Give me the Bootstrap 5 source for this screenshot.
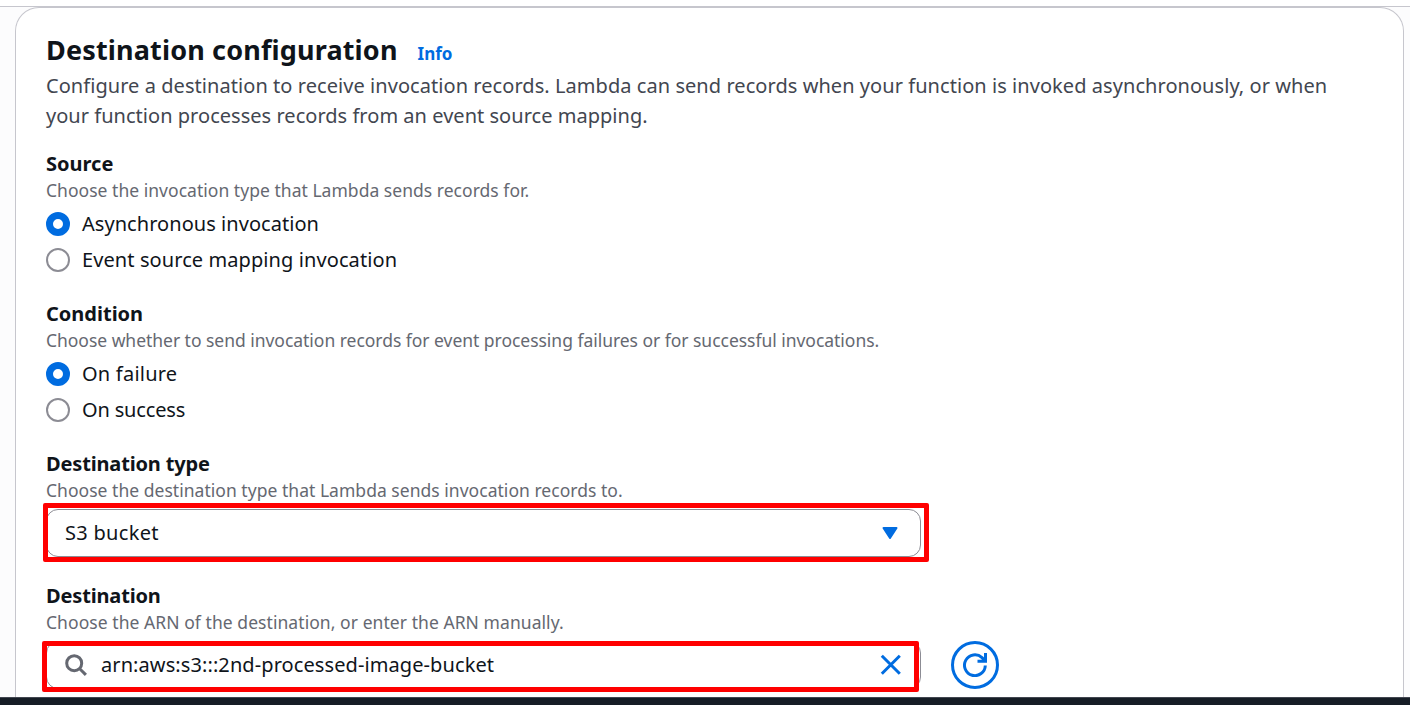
<!DOCTYPE html>
<html lang="en">
<head>
<meta charset="utf-8">
<meta name="viewport" content="width=device-width, initial-scale=1">
<title>Destination configuration</title>
<link href="https://cdn.jsdelivr.net/npm/bootstrap@5.3.0/dist/css/bootstrap.min.css" rel="stylesheet">
<style>
body{font-family:"Noto Sans",sans-serif;font-size:20px;line-height:30px;color:#0f141a;background:#fcfcfd;height:705px}
.top-strip{height:7px;flex:none;background:#fff;border-bottom:1px solid #c6c6cd}
.panel{margin:0 6px 0 15px;border:1px solid #c6c6cd;border-bottom:0;border-radius:24px 24px 0 0;background:#fff;padding:24px 30px 0;min-height:0}
.title{font-size:27px;line-height:36px;font-weight:700;letter-spacing:.16px}
.info{font-size:17px;font-weight:700;color:#006ce0;margin-left:20px}
.intro{color:#424650;margin:2px 0 18px;letter-spacing:.057px}
.intro .second-line{letter-spacing:.03px}
.field-label{font-weight:700;line-height:30px;font-size:20px}
.hint{font-size:17.5px;line-height:24px;color:#656871;margin:-1px 0 7px;letter-spacing:.03px}
.options{row-gap:6px}
.form-check-input.dial{width:24px;height:24px;margin:0 12px 0 0;border:2px solid #8c8c94;flex:none;box-shadow:none}
.form-check-input.dial:checked{border:7px solid #006ce0;background:#fff}
.field-gap{margin-bottom:24px}
.control{width:875px;height:48px;border:1.5px solid #8c8c94;border-radius:12px;padding:0 18px;background:#fff}
.control .value{letter-spacing:.09px;margin-left:12px}
.marker{position:absolute;border:5px solid #f00;border-radius:2px;pointer-events:none}
.marker-select{left:-4px;top:-7px;width:886px;height:59px}
.marker-search{left:-5px;top:-1px;width:877px;height:51px}
.refresh{width:48px;height:48px;border:3px solid #006ce0;margin-left:30px;background:#fff}
.dock{height:8px;flex:none;background:#161d26;border-top:1px solid #424650;z-index:1}
.tight{letter-spacing:-.16px}.wide{letter-spacing:.22px}
</style>
</head>
<body class="d-flex flex-column overflow-hidden">
<div class="top-strip"></div>
<main class="panel flex-grow-1">
  <header class="d-flex align-items-baseline">
    <h1 class="title mb-0">Destination configuration</h1>
    <a class="info text-decoration-none" href="#">Info</a>
  </header>
  <p class="intro text-nowrap">Configure a destination to receive invocation records. Lambda can send records when your function is invoked asynchronously, or when<br><span class="second-line">your function processes records from an event source mapping.</span></p>

  <section class="field-gap">
    <div class="field-label">Source</div>
    <div class="hint">Choose the invocation type that Lambda sends records for.</div>
    <div class="options d-flex flex-column">
      <label class="d-flex align-items-center"><input class="form-check-input dial" type="radio" name="source" checked><span style="letter-spacing:.05px">Asynchronous invocation</span></label>
      <label class="d-flex align-items-center"><input class="form-check-input dial" type="radio" name="source"><span style="letter-spacing:.09px">Event source mapping invocation</span></label>
    </div>
  </section>

  <section class="field-gap">
    <div class="field-label">Condition</div>
    <div class="hint" style="letter-spacing:-.03px">Choose whether to send invocation records for event processing failures or for successful invocations.</div>
    <div class="options d-flex flex-column">
      <label class="d-flex align-items-center"><input class="form-check-input dial" type="radio" name="condition" checked><span class="wide">On failure</span></label>
      <label class="d-flex align-items-center"><input class="form-check-input dial" type="radio" name="condition"><span class="tight">On success</span></label>
    </div>
  </section>

  <section class="field-gap">
    <div class="field-label tight">Destination type</div>
    <div class="hint">Choose the destination type that Lambda sends invocation records to.</div>
    <div class="control position-relative d-flex align-items-center justify-content-between">
      <span style="letter-spacing:.3px">S3 bucket</span>
      <svg width="24" height="24" viewBox="0 0 24 24" aria-hidden="true"><path d="M5.5 7h13L12 17z" fill="#006ce0" stroke="#006ce0" stroke-width="2" stroke-linejoin="round"/></svg>
      <div class="marker marker-select"></div>
    </div>
  </section>

  <section>
    <div class="field-label tight">Destination</div>
    <div class="hint" style="letter-spacing:.06px">Choose the ARN of the destination, or enter the ARN manually.</div>
    <div class="d-flex">
      <div class="control position-relative d-flex align-items-center">
        <svg width="24" height="24" viewBox="0 0 24 24" fill="none" stroke="#656871" stroke-width="3" aria-hidden="true"><circle cx="9.2" cy="10.2" r="7.5"/><path d="M14.7 15.7l6.2 6.2"/></svg>
        <span class="value flex-grow-1">arn:aws:s3:::2nd-processed-image-bucket</span>
        <svg width="24" height="24" viewBox="0 0 24 24" fill="none" stroke="#006ce0" stroke-width="3" aria-hidden="true"><path d="M3.8 2.8l18 18M21.8 2.8l-18 18"/></svg>
        <div class="marker marker-search"></div>
      </div>
      <button class="refresh rounded-circle p-0 d-flex align-items-center justify-content-center" type="button" aria-label="Refresh">
        <svg width="24" height="24" viewBox="0 0 24 24" fill="none" stroke="#006ce0" stroke-width="3" aria-hidden="true"><path d="M22.3 12.5A10.4 10.4 0 1 1 19 4.6l3.2 3.2M22.5 0v8.2H14.5"/></svg>
      </button>
    </div>
  </section>
</main>
<footer class="dock"></footer>
<script src="https://cdn.jsdelivr.net/npm/bootstrap@5.3.0/dist/js/bootstrap.bundle.min.js"></script>
</body>
</html>
